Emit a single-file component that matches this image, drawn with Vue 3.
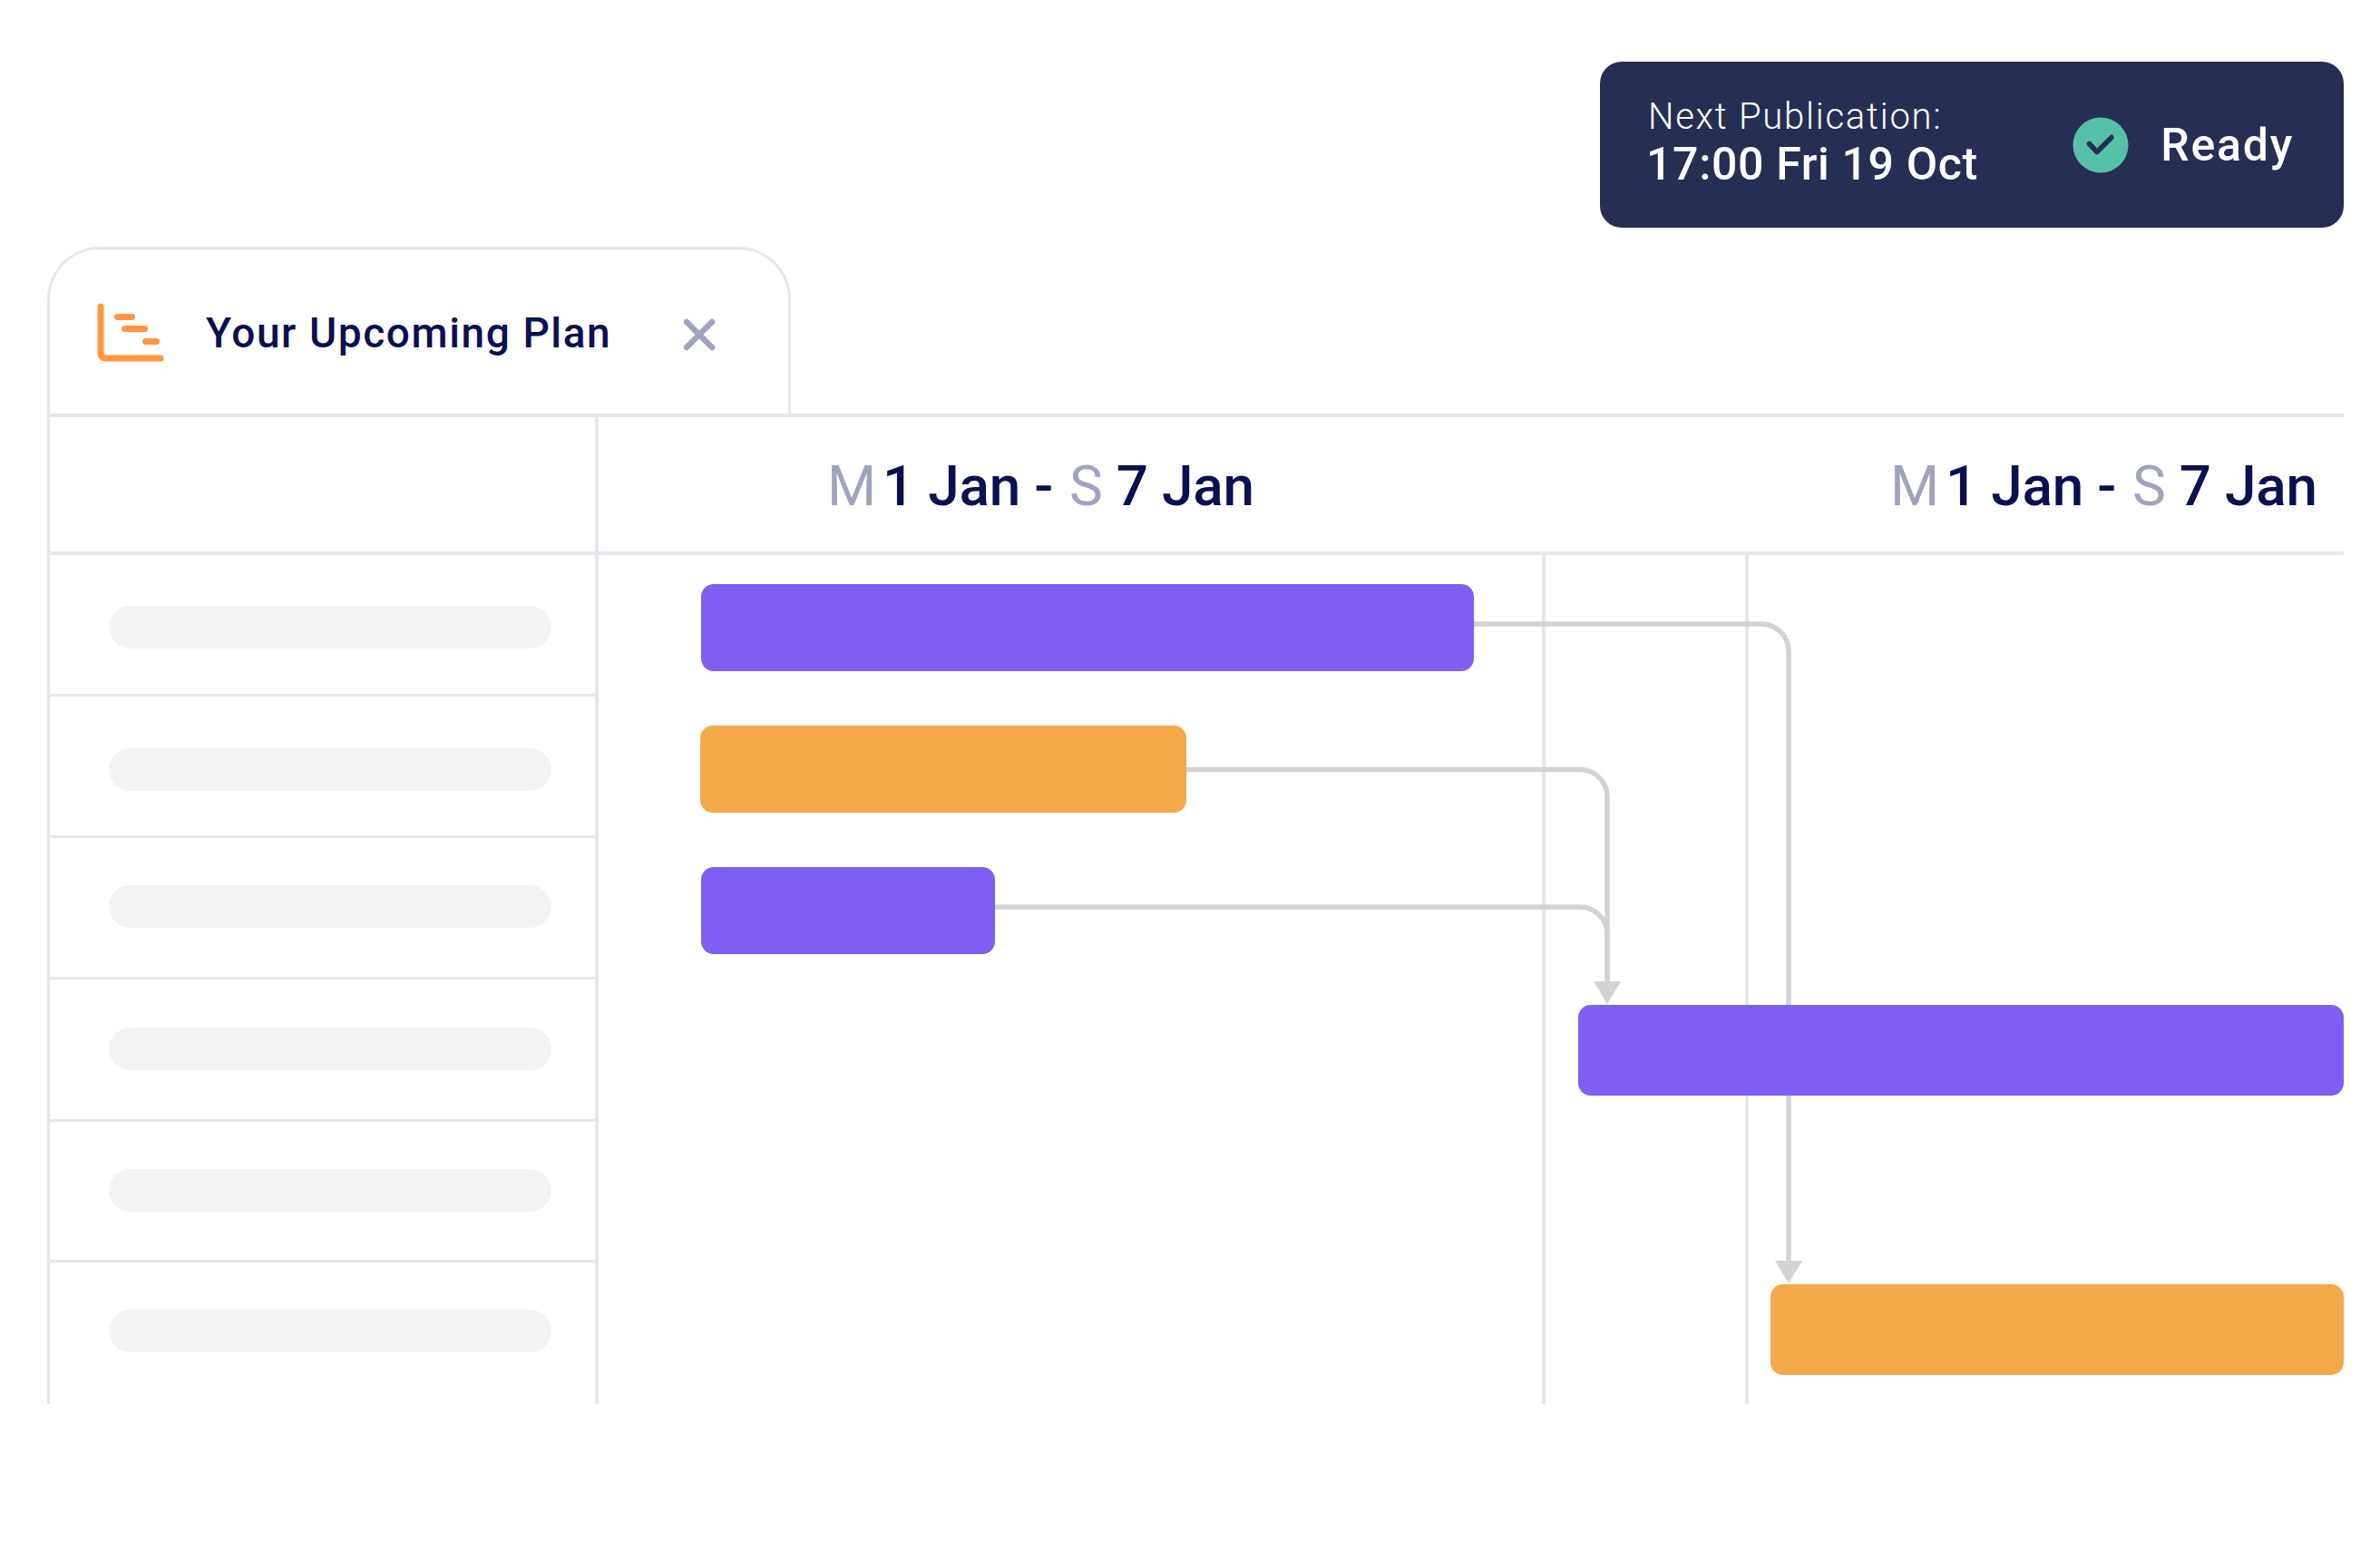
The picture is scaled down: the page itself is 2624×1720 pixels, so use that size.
<template>
  <div class="page">
    <div class="top">
      <div class="pub-card">
        <div class="pub-text">
          <div class="pub-label">Next Publication:</div>
          <div class="pub-date">17:00 Fri 19 Oct</div>
        </div>
        <div class="pub-status">
          <svg class="check" width="62" height="62" viewBox="0 0 62 62">
            <circle cx="31" cy="31" r="30.5" fill="#55c2a8" />
            <path d="M18.5 29.5 L27 38.5 L43 22.5" fill="none" stroke="#262e54" stroke-width="5.5" stroke-linecap="round" stroke-linejoin="round" />
          </svg>
          <span class="ready">Ready</span>
        </div>
      </div>
    </div>

    <div class="tab">
      <svg class="tab-icon" width="76" height="66" viewBox="0 0 76 66">
        <path d="M4 4 V55 Q4 61 10 61 H70" fill="none" stroke="#ff953f" stroke-width="7" stroke-linecap="round" />
        <rect x="19" y="12" width="23" height="7" rx="3.5" fill="#ff953f" />
        <rect x="27" y="25" width="29" height="7" rx="3.5" fill="#ff953f" />
        <rect x="50" y="39" width="19" height="7" rx="3.5" fill="#ff953f" />
      </svg>
      <span class="tab-title">Your Upcoming Plan</span>
      <svg class="tab-close" width="36" height="36" viewBox="0 0 36 36">
        <path d="M4 4 L32 32 M32 4 L4 32" fill="none" stroke="#a0a3bd" stroke-width="6.5" stroke-linecap="round" />
      </svg>
    </div>

    <div class="table">
      <div class="head">
        <div class="head-left"></div>
        <div class="head-right">
          <div v-for="n in 2" :key="n" class="date">
            <span class="dim">M</span><span class="from">1 Jan -</span><span class="dim dim-s">S</span><span class="to">7 Jan</span>
          </div>
        </div>
      </div>
      <div class="body">
        <div class="names">
          <div
            v-for="(row, i) in rows"
            :key="i"
            class="name-row"
            :style="{ height: row.h + 'px', paddingTop: row.pad + 'px' }"
          >
            <div class="skeleton"></div>
          </div>
        </div>
        <div class="chart">
          <div class="grid-line" style="left: 1040px"></div>
          <div class="grid-line" style="left: 1264px"></div>
          <svg class="links" width="1924" height="936" viewBox="0 0 1924 936">
            <g fill="none" stroke="#d3d3d6" stroke-width="5.5">
              <path d="M965 76 H1282 a30 30 0 0 1 30 30 V780" />
              <path d="M647 236.5 H1082 a30 30 0 0 1 30 30 V472" />
              <path d="M437 388 H1082 a30 30 0 0 1 30 30 V472" />
            </g>
            <polygon points="1097,470 1127,470 1112,495" fill="#d3d3d6" />
            <polygon points="1297,778 1327,778 1312,803" fill="#d3d3d6" />
          </svg>
          <div
            v-for="(bar, i) in bars"
            :key="i"
            class="bar"
            :class="bar.kind"
            :style="{ left: bar.x + 'px', top: bar.y + 'px', width: bar.w + 'px', height: bar.h + 'px' }"
          ></div>
        </div>
      </div>
    </div>
  </div>
</template>

<script setup>
const rows = [
  { h: 156, pad: 56 },
  { h: 156, pad: 57 },
  { h: 156, pad: 52 },
  { h: 157, pad: 53 },
  { h: 155, pad: 52 },
  { h: 156, pad: 52 }
]

const bars = [
  { kind: 'purple', x: 113, y: 32, w: 852, h: 96 },
  { kind: 'orange', x: 112, y: 188, w: 536, h: 96 },
  { kind: 'purple', x: 113, y: 344, w: 324, h: 96 },
  { kind: 'purple', x: 1080, y: 496, w: 844, h: 100 },
  { kind: 'orange', x: 1292, y: 804, w: 632, h: 100 }
]
</script>

<style>
html,
body {
  margin: 0;
  background: #fff;
}
</style>

<style scoped>
.page {
  width: 2624px;
  height: 1720px;
  box-sizing: border-box;
  padding: 68px 40px 0 52px;
  font-family: Roboto, "Liberation Sans", sans-serif;
  background: #fff;
  overflow: hidden;
}

.top {
  display: flex;
  justify-content: flex-end;
}

.pub-card {
  width: 820px;
  height: 183px;
  box-sizing: border-box;
  padding: 0 55px 0 51px;
  border-radius: 24px;
  background: #262e54;
  color: #fff;
  display: flex;
  align-items: center;
  justify-content: space-between;
}

.pub-text {
  margin-top: -3px;
}

.pub-label {
  margin-left: 2px;
  font-size: 40px;
  font-weight: 300;
  line-height: 46px;
  letter-spacing: 1.75px;
}

.pub-date {
  font-size: 50px;
  font-weight: 500;
  line-height: 58px;
  letter-spacing: 0.65px;
}

.pub-status {
  display: flex;
  align-items: center;
  gap: 35px;
}

.check {
  display: block;
}

.ready {
  font-size: 50px;
  font-weight: 500;
  letter-spacing: 1.8px;
}

.tab {
  width: 820px;
  height: 184px;
  margin-top: 21px;
  box-sizing: border-box;
  border: 3px solid #e6e6ec;
  border-bottom: none;
  border-radius: 58px 58px 0 0;
  display: flex;
  align-items: center;
  padding: 0 0 0 52px;
  color: #0a1050;
}

.tab-icon {
  display: block;
  margin-top: 3px;
}

.tab-title {
  margin-left: 44px;
  margin-top: 3px;
  font-size: 46px;
  font-weight: 500;
  letter-spacing: 1.6px;
}

.tab-close {
  display: block;
  margin-left: 79px;
  margin-top: 6px;
}

.table {
  width: 2529px;
  border-top: 4px solid #e6e6ec;
  border-left: 3px solid #e6e6ec;
}

.head {
  display: flex;
  height: 148px;
  border-bottom: 4px solid #e6e6ec;
}

.head-left {
  width: 601px;
  border-right: 4px solid #e6e6ec;
}

.head-right {
  flex: 1;
  display: grid;
  grid-template-columns: 1172px auto;
  align-items: center;
  padding-left: 252px;
  white-space: nowrap;
}

.date {
  margin-top: 2px;
  font-size: 62px;
  font-weight: 500;
  letter-spacing: -0.2px;
  color: #0a1050;
}

.dim {
  color: #a0a3bd;
  font-weight: 400;
}

.from {
  margin-left: 7px;
}

.dim-s {
  margin-left: 18px;
}

.to {
  margin-left: 15px;
}

.body {
  display: flex;
  height: 936px;
}

.names {
  width: 601px;
  border-right: 4px solid #e6e6ec;
}

.name-row {
  box-sizing: border-box;
  padding-left: 65px;
  border-bottom: 3px solid #e6e6ec;
}

.name-row:last-child {
  border-bottom: none;
}

.skeleton {
  width: 488px;
  height: 47px;
  border-radius: 24px;
  background: #f3f3f3;
}

.chart {
  flex: 1;
  position: relative;
}

.grid-line {
  position: absolute;
  top: 0;
  bottom: 0;
  width: 4px;
  background: #e6e6ec;
}

.links {
  position: absolute;
  left: 0;
  top: 0;
  display: block;
}

.bar {
  position: absolute;
  border-radius: 14px;
}

.purple {
  background: #7f5ff2;
}

.orange {
  background: #f3a949;
}
</style>
